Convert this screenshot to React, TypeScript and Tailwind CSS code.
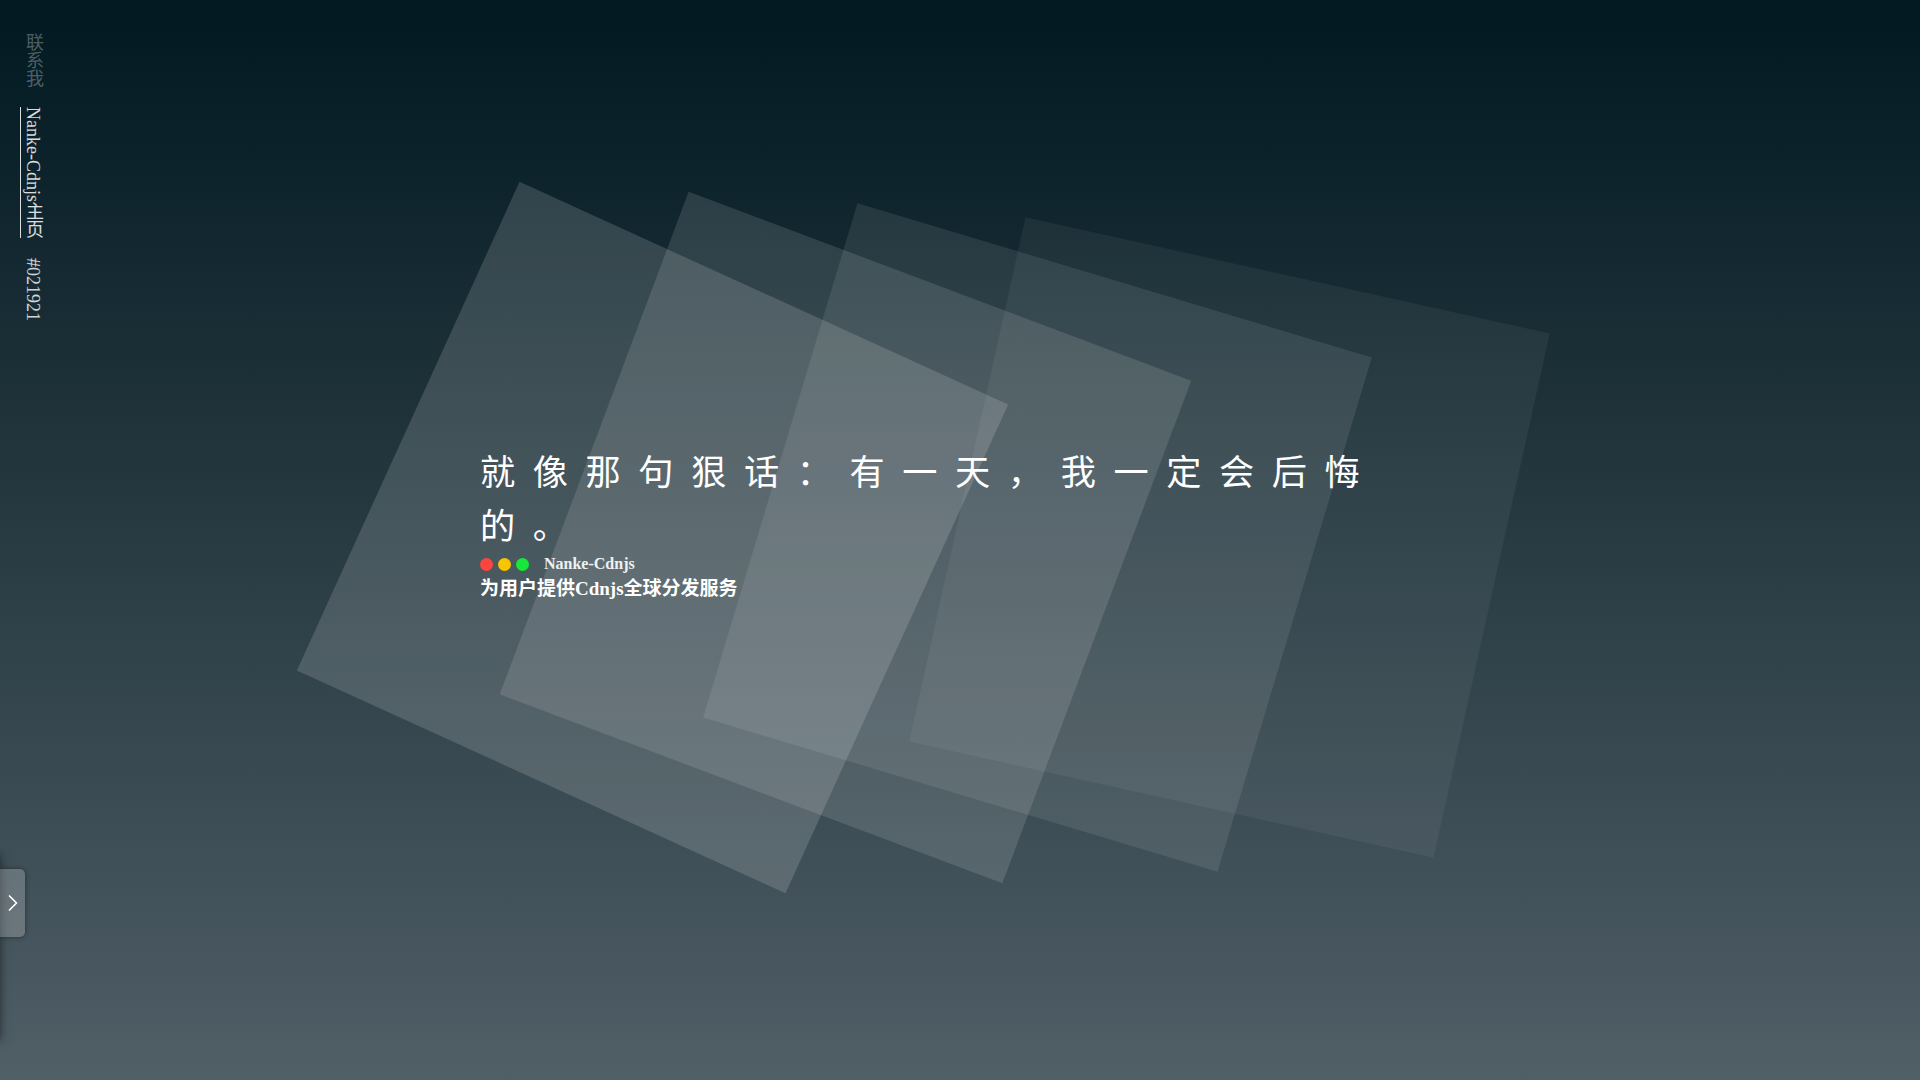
import { ChevronRight } from "lucide-react";

const PANES = [
  { left: "left-[384px]", rot: "rotate-[24.5deg]", fill: "bg-white/15" },
  { left: "left-[577px]", rot: "rotate-[20.6deg]", fill: "bg-white/[0.12]" },
  { left: "left-[769px]", rot: "rotate-[16.7deg]", fill: "bg-white/[0.09]" },
  { left: "left-[961px]", rot: "rotate-[12.5deg]", fill: "bg-white/[0.055]" },
];

const SideNav = () => (
  <nav className="absolute left-[19px] top-[33px] z-20 flex flex-col gap-5 font-['Liberation_Serif','Noto_Sans_CJK_SC',serif] text-[18px] leading-[28px]">
    <span className="[writing-mode:vertical-rl] text-white/30">联系我</span>
    <a href="#" className="[writing-mode:vertical-rl] text-white/85 underline underline-offset-2">
      Nanke-Cdnjs主页
    </a>
    <span className="[writing-mode:vertical-rl] text-white/80">#021921</span>
  </nav>
);

const Drawer = () => (
  <div className="absolute left-0 top-[855px] z-20 h-[185px] w-0">
    <div className="absolute right-0 top-0 h-full w-[320px] bg-[#44545c] shadow-[0_0_9px_rgba(0,0,0,0.55)]" />
    <button
      type="button"
      className="absolute left-0 top-[14px] flex h-[68px] w-[25px] items-center justify-center rounded-r-[5px] bg-white/20 shadow-[0_0_5px_rgba(0,0,0,0.45)]"
    >
      <ChevronRight className="h-[28px] w-[28px] shrink-0 text-white" strokeWidth={1.5} />
    </button>
  </div>
);

export default function App() {
  return (
    <div className="relative h-screen w-screen overflow-hidden bg-linear-to-b from-[#021921] to-[#515f67]">
      {PANES.map((p) => (
        <div
          key={p.left}
          className={`absolute top-[269px] h-[537px] w-[537px] ${p.left} ${p.rot} ${p.fill}`}
        />
      ))}

      <SideNav />
      <Drawer />

      <main className="relative z-10 pl-[480px] pt-[443px]">
        <div className="w-[920px]">
          <h1 className="font-['Noto_Sans_CJK_SC',sans-serif] text-[35.2px] font-normal leading-[54px] tracking-[0.5em] text-white">
            就像那句狠话：有一天，我一定会后悔的。
          </h1>
          <div className="mt-[3px] flex h-5 items-center">
            <span className="h-[13px] w-[13px] rounded-full bg-[#f9463f]" />
            <span className="ml-[5px] h-[13px] w-[13px] rounded-full bg-[#f6c600]" />
            <span className="ml-[5px] h-[13px] w-[13px] rounded-full bg-[#17e63a]" />
            <span className="ml-[15px] font-['Liberation_Serif',serif] text-[16px] font-bold text-white/90">
              Nanke-Cdnjs
            </span>
          </div>
          <p className="mt-[3px] font-['Liberation_Serif','Noto_Sans_CJK_SC',serif] text-[19px] font-bold leading-6 text-white">
            为用户提供Cdnjs全球分发服务
          </p>
        </div>
      </main>
    </div>
  );
}
